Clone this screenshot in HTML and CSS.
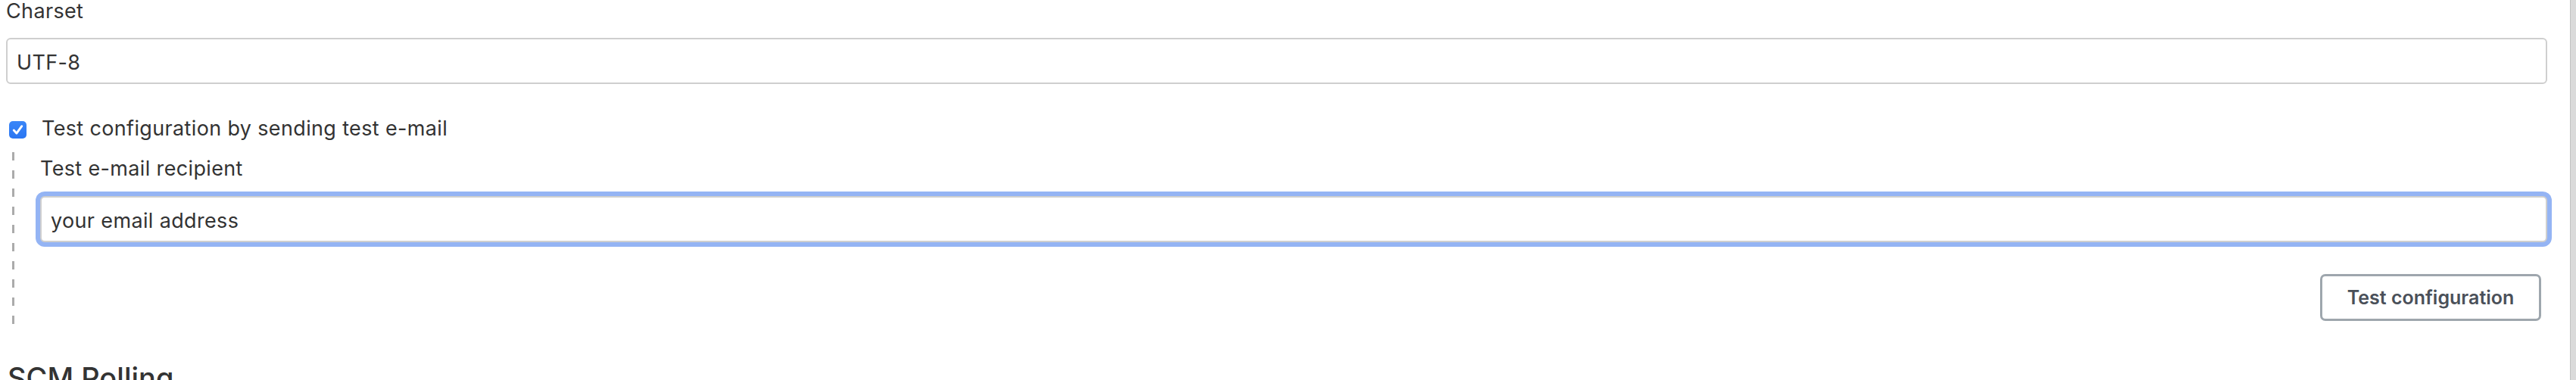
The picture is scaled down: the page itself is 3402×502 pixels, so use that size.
FILE: index.html
```html
<!DOCTYPE html>
<html lang="en">
<head>
<meta charset="utf-8">
<title>Email configuration</title>
<link rel="stylesheet" href="styles.css">
</head>
<body>
<div class="page">
  <main class="content">
    <div class="field">
      <div class="label">Charset</div>
      <input class="text-input" type="text" value="UTF-8">
    </div>
    <label class="check-row">
      <span class="checkbox">
        <svg viewBox="0 0 24 24" width="23" height="23"><path d="M6.5 12.5 L10.3 16.8 L17.5 7" fill="none" stroke="#fff" stroke-width="3" stroke-linecap="round" stroke-linejoin="round"/></svg>
      </span>
      <span class="check-text">Test configuration by sending test e-mail</span>
    </label>
    <div class="nested">
      <div class="label">Test e-mail recipient</div>
      <input class="text-input focused" type="text" value="your email address">
      <div class="actions">
        <button class="btn" type="button">Test configuration</button>
      </div>
    </div>
    <h2 class="section">SCM Polling</h2>
  </main>
  <div class="scrollbar"></div>
</div>
</body>
</html>
```

FILE: styles.css
```css
html, body {
  margin: 0;
  padding: 0;
  background: #fff;
}
body {
  height: 502px;
  overflow: hidden;
  font-family: Inter, "Liberation Sans", sans-serif;
  color: #333;
}
.page {
  display: flex;
  height: 502px;
}
.content {
  flex: 1;
  padding: 0 30px 0 8px;
  min-width: 0;
}
.scrollbar {
  width: 7px;
  background: #dadada;
  border-left: 1px solid #c2c2c2;
}
.label {
  font-size: 27px;
  letter-spacing: 0.35px;
  line-height: 30px;
  color: #333;
}
.text-input {
  display: block;
  box-sizing: border-box;
  width: 100%;
  height: 61px;
  margin: 20px 0 0;
  padding: 4px 12px 0;
  border: 2px solid #cfcfcf;
  border-radius: 6px;
  background: #fff;
  font-family: Inter, "Liberation Sans", sans-serif;
  font-size: 27px;
  letter-spacing: 0.35px;
  color: #333;
  outline: none;
}
.text-input.focused {
  margin-top: 21px;
  box-shadow: 0 0 0 6px #94b4f4;
}
.check-row {
  display: flex;
  align-items: flex-start;
  margin-top: 44px;
  font-size: 27px;
  letter-spacing: 0.35px;
  line-height: 30px;
  color: #333;
}
.checkbox {
  width: 23px;
  height: 23px;
  margin: 5px 20px 0 4px;
  border-radius: 5px;
  background: linear-gradient(#3a86f8, #2a76f2);
  display: flex;
  flex: none;
}
.nested {
  margin: 16px 0 0 8px;
  padding: 7px 0 5px 37px;
  background-image: repeating-linear-gradient(to bottom, #ababab 0, #ababab 11px, transparent 11px, transparent 24px);
  background-size: 3px 100%;
  background-repeat: no-repeat;
  background-position: left top;
}
.actions {
  display: flex;
  justify-content: flex-end;
  margin-top: 42px;
  padding-right: 8px;
}
.btn {
  box-sizing: border-box;
  width: 292px;
  height: 62px;
  border: 3px solid #9ea6ad;
  border-radius: 7px;
  background: #fff;
  font-family: Inter, "Liberation Sans", sans-serif;
  font-size: 25px;
  font-weight: 600;
  color: #4a5059;
  padding: 0;
}
.section {
  margin: 47px 0 0 2px;
  font-size: 38px;
  line-height: 46px;
  font-weight: 500;
  color: #333;
}
```
